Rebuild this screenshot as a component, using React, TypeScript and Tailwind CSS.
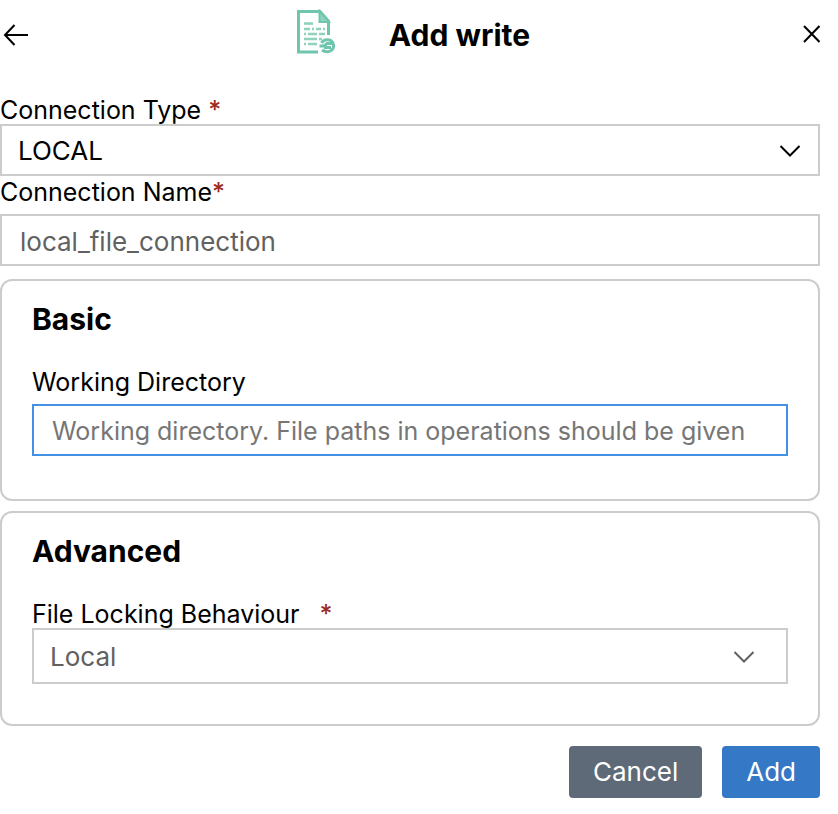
import { useState } from "react";
import type { ReactNode } from "react";

function Required() {
  return <span className="font-medium text-[#9c2b1d]">*</span>;
}

function FileIcon() {
  return (
    <svg viewBox="0 0 40 46" className="mb-1.5 h-[46px] w-10" fill="none" aria-hidden="true">
      <path d="M32.500 26V12L24 2.500H2.500V43H22" stroke="#70c6ad" strokeWidth="3" />
      <path d="M23.500 2V13H33Z" fill="#8fd2be" stroke="#70c6ad" strokeWidth="2" />
      <g stroke="#8fd2be" strokeWidth="2.600">
        <path d="M8 14.500H17" />
        <path d="M8 20H14M16 20H18M20 20H25M27 20H29" />
        <path d="M8 25H10M12 25H21M23 25H29" />
        <path d="M8 30H21M23 30H26" />
        <path d="M8 35H10M12 35H21" />
      </g>
      <path d="M25.500 34C28 29.500 36 29.500 37.500 35.500C38.500 41.500 31.500 45 26 41" stroke="#70c6ad" strokeWidth="3" />
      <path d="M37 34.500H31L28 37H23.500M35 38.500H28" stroke="#70c6ad" strokeWidth="3" />
    </svg>
  );
}

function Dropdown({ id, options, className, chevron }: { id: string; options: string[]; className: string; chevron: string }) {
  return (
    <div className="relative">
      <select
        id={id}
        className={`block w-full appearance-none border-2 border-[#cccccc] bg-white px-4 pt-[2px] text-[26px] outline-none ${className}`}
      >
        {options.map((option) => (
          <option key={option}>{option}</option>
        ))}
      </select>
      <svg viewBox="0 0 22 14" className={`pointer-events-none absolute top-1/2 h-3.5 w-[22px] -translate-y-1/2 ${chevron}`} fill="none" aria-hidden="true">
        <path d="M1.500 3L11 12.500L20.500 3" stroke="currentColor" strokeWidth="2" />
      </svg>
    </div>
  );
}

function Section({ title, children }: { title: string; children: ReactNode }) {
  return (
    <section className="rounded-xl border-2 border-[#cccccc] px-[30px] pt-[18px]">
      <h2 className="text-[30px] leading-10 font-bold">{title}</h2>
      {children}
    </section>
  );
}

export default function App() {
  const [name, setName] = useState("local_file_connection");
  return (
    <main className="bg-white pr-[18px] font-['Inter',sans-serif] text-[25px] leading-7 text-black">
      <header className="mb-[26px] flex h-[70px] items-center justify-between">
        <button type="button" aria-label="Back">
          <svg viewBox="0 0 32 24" className="h-6 w-8" fill="none" aria-hidden="true">
            <path d="M28 12H5M14.500 2L5 12L14.500 22" stroke="black" strokeWidth="2" />
          </svg>
        </button>
        <div className="flex items-center gap-[53px]">
          <FileIcon />
          <h1 className="text-[30px] leading-10 font-bold">Add write</h1>
        </div>
        <button type="button" aria-label="Close" className="pb-[2px] pl-2">
          <svg viewBox="0 0 18 18" className="h-[18px] w-[18px]" fill="none" aria-hidden="true">
            <path d="M2 1L17.500 17M17.500 1L2 17" stroke="black" strokeWidth="2" />
          </svg>
        </button>
      </header>
      <form onSubmit={(event) => event.preventDefault()}>
        <label htmlFor="type" className="block">
          Connection Type <Required />
        </label>
        <Dropdown id="type" options={["LOCAL", "FTP", "SFTP"]} className="h-[52px]" chevron="right-[19px]" />
        <label htmlFor="name" className="mt-[2px] mb-2 block">
          Connection Name<Required />
        </label>
        <input
          id="name"
          value={name}
          onChange={(event) => setName(event.target.value)}
          className="block h-[52px] w-full border-2 border-[#cccccc] px-[18px] pt-[2px] text-[26px] text-[#616161] outline-none"
        />
        <div className="mt-[13px] flex flex-col gap-[10px]">
          <Section title="Basic">
            <label htmlFor="directory" className="mt-[29px] mb-2 block">
              Working Directory
            </label>
            <input
              id="directory"
              placeholder="Working directory. File paths in operations should be given"
              className="mb-[43px] block h-[52px] w-full border-2 border-[#4390e4] px-[18px] pt-[2px] outline-none placeholder:text-[#767676]"
            />
          </Section>
          <Section title="Advanced">
            <label htmlFor="locking" className="mt-[29px] flex gap-5">
              File Locking Behaviour <Required />
            </label>
            <Dropdown id="locking" options={["Local", "None"]} className="mb-10 h-14 text-[#616161]" chevron="right-[33px] text-[#616161]" />
          </Section>
        </div>
        <div className="mt-5 flex justify-end gap-5 text-[26px] text-white">
          <button type="button" className="h-[52px] rounded-sm bg-[#5f6a79] px-6">
            Cancel
          </button>
          <button type="submit" className="h-[52px] rounded-sm bg-[#3478c6] px-6">
            Add
          </button>
        </div>
      </form>
    </main>
  );
}
